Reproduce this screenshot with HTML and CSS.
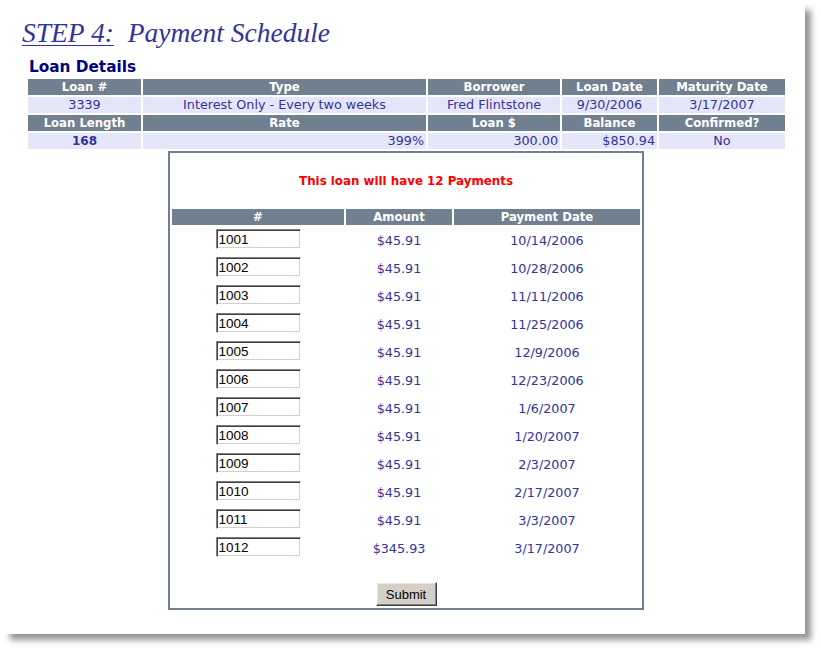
FILE: index.html
```html
<!DOCTYPE html>
<html>
<head>
<meta charset="utf-8">
<title>Payment Schedule</title>
<link rel="stylesheet" href="styles.css">
</head>
<body>
<div class="page">
  <h1 class="title"><span class="step">STEP 4:</span>&nbsp; Payment Schedule</h1>
  <h2 class="section">Loan Details</h2>
  <table class="details">
    <colgroup>
      <col class="d1"><col class="d2"><col class="d3"><col class="d4"><col class="d5">
    </colgroup>
    <tr class="head">
      <th>Loan #</th><th>Type</th><th>Borrower</th><th>Loan Date</th><th>Maturity Date</th>
    </tr>
    <tr class="data">
      <td>3339</td><td>Interest Only - Every two weeks</td><td>Fred Flintstone</td><td>9/30/2006</td><td>3/17/2007</td>
    </tr>
    <tr class="head">
      <th>Loan Length</th><th>Rate</th><th>Loan $</th><th>Balance</th><th>Confirmed?</th>
    </tr>
    <tr class="data">
      <td class="strong">168</td><td class="num">399%</td><td class="num">300.00</td><td class="num">$850.94</td><td>No</td>
    </tr>
  </table>

  <form class="schedule">
    <div class="notice">This loan will have 12 Payments</div>
    <table class="payments">
      <colgroup>
        <col class="p1"><col class="p2"><col class="p3">
      </colgroup>
      <tr class="head"><th>#</th><th>Amount</th><th>Payment Date</th></tr>
      <tr><td><input class="field" type="text" value="1001"></td><td>$45.91</td><td>10/14/2006</td></tr>
      <tr><td><input class="field" type="text" value="1002"></td><td>$45.91</td><td>10/28/2006</td></tr>
      <tr><td><input class="field" type="text" value="1003"></td><td>$45.91</td><td>11/11/2006</td></tr>
      <tr><td><input class="field" type="text" value="1004"></td><td>$45.91</td><td>11/25/2006</td></tr>
      <tr><td><input class="field" type="text" value="1005"></td><td>$45.91</td><td>12/9/2006</td></tr>
      <tr><td><input class="field" type="text" value="1006"></td><td>$45.91</td><td>12/23/2006</td></tr>
      <tr><td><input class="field" type="text" value="1007"></td><td>$45.91</td><td>1/6/2007</td></tr>
      <tr><td><input class="field" type="text" value="1008"></td><td>$45.91</td><td>1/20/2007</td></tr>
      <tr><td><input class="field" type="text" value="1009"></td><td>$45.91</td><td>2/3/2007</td></tr>
      <tr><td><input class="field" type="text" value="1010"></td><td>$45.91</td><td>2/17/2007</td></tr>
      <tr><td><input class="field" type="text" value="1011"></td><td>$45.91</td><td>3/3/2007</td></tr>
      <tr><td><input class="field" type="text" value="1012"></td><td>$345.93</td><td>3/17/2007</td></tr>
    </table>
    <div class="actions"><button class="submit" type="button">Submit</button></div>
  </form>
</div>
</body>
</html>
```

FILE: styles.css
```css
html, body {
  margin: 0;
  padding: 0;
  background: #ffffff;
}

body {
  min-height: 650px;
  padding-bottom: 16px;
  overflow: hidden;
}

.page {
  width: 805px;
  height: 634px;
  background: #ffffff;
  box-shadow: 8px 8px 6px -2px rgba(0, 0, 0, 0.42);
  overflow: hidden;
  box-sizing: border-box;
  padding-top: 17px;
}

.title {
  margin: 0 0 0 22px;
  font-family: "Liberation Serif", "Times New Roman", serif;
  font-style: italic;
  font-weight: normal;
  font-size: 27.5px;
  line-height: 32px;
  color: #333399;
}

.step {
  text-decoration: underline;
  text-decoration-thickness: 1px;
  text-underline-offset: 3px;
}

.section {
  margin: 9px 0 0 29px;
  font-family: "DejaVu Sans", Verdana, sans-serif;
  font-weight: bold;
  font-size: 15.3px;
  line-height: 19px;
  color: #000080;
}

table {
  border-collapse: separate;
  border-spacing: 2px;
  table-layout: fixed;
  font-family: "DejaVu Sans", Verdana, sans-serif;
  font-size: 12.75px;
}

.details {
  margin-left: 26px;
  width: 761px;
}

.d1 { width: 113px; }
.d2 { width: 283px; }
.d3 { width: 132px; }
.d4 { width: 95px; }
.d5 { width: 126px; }

th {
  background: #708090;
  color: #ffffff;
  font-weight: bold;
  font-size: 11.7px;
  height: 16px;
  line-height: 16px;
  padding: 0 2px;
  text-align: center;
  white-space: nowrap;
}

.details td {
  background: #e6e6fa;
  color: #333399;
  height: 16px;
  line-height: 16px;
  padding: 0 2px;
  text-align: center;
  white-space: nowrap;
}

.details td.num {
  text-align: right;
}

.details td.strong {
  font-weight: bold;
  font-size: 12px;
}

.schedule {
  margin: 0 0 0 168px;
  width: 476px;
  height: 459px;
  box-sizing: border-box;
  border: 2px solid #708090;
}

.notice {
  padding-top: 3px;
  height: 51px;
  line-height: 51px;
  text-align: center;
  font-family: "DejaVu Sans", Verdana, sans-serif;
  font-weight: bold;
  font-size: 11.85px;
  color: #ff0000;
}

.payments {
  width: 472px;
}

.p1 { width: 172px; }
.p2 { width: 106px; }
.p3 { width: 186px; }

.payments td {
  height: 20px;
  padding: 2px 0 4px;
  text-align: center;
  vertical-align: middle;
  color: #333399;
  line-height: 20px;
}

.payments td + td {
  padding: 4px 0 2px;
}

.field {
  display: block;
  margin: 0 auto;
  width: 85px;
  height: 20px;
  box-sizing: border-box;
  padding: 0 0 0 2px;
  border: 1px solid;
  border-color: #808080 #ffffff #ffffff #808080;
  box-shadow: inset 1px 1px 0 #404040, inset -1px -1px 0 #d4d0c8;
  background: #ffffff;
  font-family: "Liberation Sans", Arial, sans-serif;
  font-size: 13.5px;
  color: #000000;
  outline: none;
}

.actions {
  padding-top: 19px;
  text-align: center;
}

.submit {
  width: 61px;
  height: 24px;
  padding: 0;
  box-sizing: border-box;
  background: #d4d0c8;
  border: 1px solid;
  border-color: #ffffff #404040 #404040 #ffffff;
  box-shadow: inset -1px -1px 0 #808080, inset 1px 1px 0 #e8e6e0;
  font-family: "Liberation Sans", Arial, sans-serif;
  font-size: 13px;
  color: #000000;
}
```
